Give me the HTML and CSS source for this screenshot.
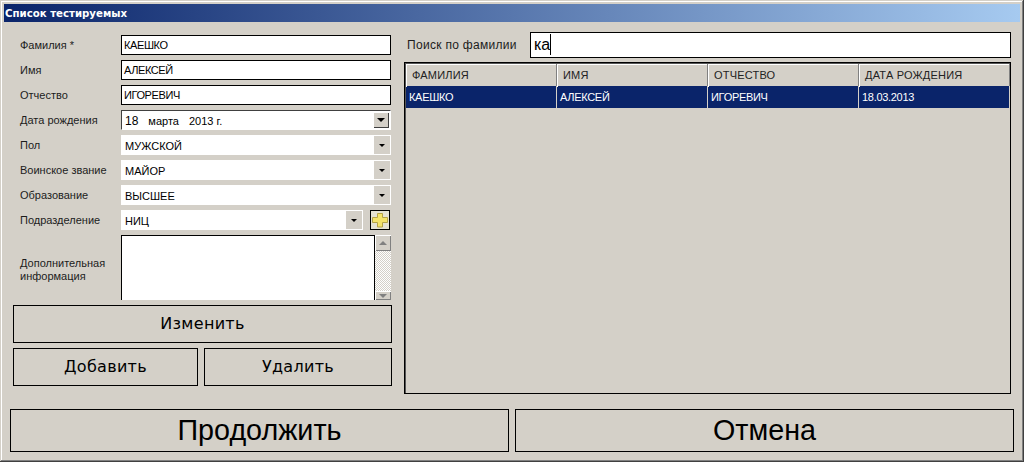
FILE: index.html
```html
<!DOCTYPE html>
<html>
<head>
  <meta charset="utf-8">
  <meta name="viewport" content="width=device-width">
  <title>Список тестируемых</title>
  <link rel="stylesheet" href="styles.css">
</head>
<body>
  <div class="window">
    <div class="titlebar">Список тестируемых</div>
    <div class="main">
      <div class="left">
        <div class="form">
          <div class="label">Фамилия *</div>
          <div class="edit">КАЕШКО</div>
          <div class="label">Имя</div>
          <div class="edit">АЛЕКСЕЙ</div>
          <div class="label">Отчество</div>
          <div class="edit">ИГОРЕВИЧ</div>
          <div class="label">Дата рождения</div>
          <div class="date">
            <span class="date-text"><span>18</span><span>марта</span><span>2013 г.</span></span>
            <span class="date-btn"><i class="arrow"></i></span>
          </div>
          <div class="label">Пол</div>
          <div class="combo"><span class="combo-text">МУЖСКОЙ</span><span class="combo-btn"><i class="arrow small"></i></span></div>
          <div class="label">Воинское звание</div>
          <div class="combo"><span class="combo-text">МАЙОР</span><span class="combo-btn"><i class="arrow small"></i></span></div>
          <div class="label">Образование</div>
          <div class="combo"><span class="combo-text">ВЫСШЕЕ</span><span class="combo-btn"><i class="arrow small"></i></span></div>
          <div class="label">Подразделение</div>
          <div class="combo-row">
            <div class="combo"><span class="combo-text">НИЦ</span><span class="combo-btn"><i class="arrow small"></i></span></div>
            <div class="add-btn">
              <svg width="18" height="18" viewBox="0 0 18 18"><path d="M6.500 2.500h5v4h5v5h-5v4.500h-5v-4.500h-5v-5h5z" fill="#f5e36a" stroke="#b5a347"/></svg>
            </div>
          </div>
          <div class="label memo-label">Дополнительная информация</div>
          <div class="memo">
            <div class="memo-text"></div>
            <div class="scroll">
              <span class="scroll-btn"><i class="arrow up"></i></span>
              <span class="scroll-track"></span>
              <span class="scroll-btn cut"><i class="arrow"></i></span>
            </div>
          </div>
        </div>
        <div class="btn btn-mid">Изменить</div>
        <div class="btn-row">
          <div class="btn btn-mid btn-add">Добавить</div>
          <div class="btn btn-mid btn-del">Удалить</div>
        </div>
      </div>
      <div class="right">
        <div class="search">
          <div class="search-label">Поиск по фамилии</div>
          <div class="search-box"><span class="search-text">ка</span></div>
        </div>
        <div class="grid">
          <div class="grid-row grid-head">
            <div>ФАМИЛИЯ</div>
            <div>ИМЯ</div>
            <div>ОТЧЕСТВО</div>
            <div>ДАТА РОЖДЕНИЯ</div>
          </div>
          <div class="grid-row grid-sel">
            <div>КАЕШКО</div>
            <div>АЛЕКСЕЙ</div>
            <div>ИГОРЕВИЧ</div>
            <div>18.03.2013</div>
          </div>
        </div>
      </div>
    </div>
    <div class="footer">
      <div class="btn btn-big">Продолжить</div>
      <div class="btn btn-big">Отмена</div>
    </div>
  </div>
</body>
</html>
```

FILE: styles.css
```css
*{
  padding: 0;
  margin: 0;
  box-sizing: border-box;
}
html, body{
  width: 1024px;
  height: 462px;
  overflow: hidden;
}
body{
  font-family: "Liberation Sans", Arial, sans-serif;
  font-size: 11px;
  color: #000;
  background: #d4d0c8;
}
.window{
  display: flex;
  flex-direction: column;
  width: 1024px;
  height: 462px;
  padding: 4px;
  background: #d4d0c8;
  box-shadow: inset -1px -1px 0 #404040, inset 1px 1px 0 #d4d0c8, inset -2px -2px 0 #808080, inset 2px 2px 0 #fff;
}
.titlebar{
  height: 18px;
  padding-left: 1px;
  font-family: "DejaVu Sans", sans-serif;
  font-size: 10.2px;
  font-weight: bold;
  line-height: 19px;
  color: #fff;
  background: linear-gradient(to right, #0a246a, #a6caf0);
}
.main{
  display: flex;
  flex: 1;
  gap: 12px;
  padding: 10px 0 0 9px;
}
.left{
  width: 379px;
  padding-top: 3px;
}
.form{
  display: grid;
  grid-template-columns: 108px 270px;
  grid-template-rows: repeat(8, 20px) 65px;
  row-gap: 5px;
  align-items: center;
}
.label{
  padding-left: 7px;
  line-height: 21px;
  color: #1c1c1c;
  white-space: nowrap;
}
.edit{
  height: 20px;
  padding-left: 2px;
  line-height: 18px;
  letter-spacing: -.4px;
  background: #fff;
  border: 1px solid #000;
}
.date{
  display: flex;
  justify-content: space-between;
  height: 20px;
  background: #fff;
  border: 1px solid;
  border-color: #404040 #fff #fff #404040;
}
.date-text{
  display: flex;
  gap: 10px;
  padding-left: 3px;
  line-height: 20px;
}
.date-text span:first-child{
  font-size: 12px;
}
.date-btn{
  display: flex;
  align-items: center;
  justify-content: center;
  width: 16px;
  height: 16px;
  margin: 1px;
  background: #d4d0c8;
  box-shadow: inset 1px 1px 0 #fff, inset -1px -1px 0 #404040;
}
.arrow{
  width: 0;
  height: 0;
  border-left: 4px solid transparent;
  border-right: 4px solid transparent;
  border-top: 4px solid #000;
}
.arrow.small{
  border-left-width: 3px;
  border-right-width: 3px;
  border-top-width: 3px;
}
.arrow.up{
  border-top: 0;
  border-bottom: 4px solid #808080;
}
.combo{
  display: flex;
  flex: 1;
  justify-content: space-between;
  height: 20px;
  background: #fff;
}
.combo-text{
  padding-left: 4px;
  line-height: 22px;
}
.combo-btn{
  display: flex;
  align-items: center;
  justify-content: center;
  width: 16px;
  height: 18px;
  margin: 1px;
  background: #d4d0c8;
}
.combo-row{
  display: flex;
  gap: 7px;
  height: 20px;
}
.add-btn{
  width: 20px;
  height: 20px;
  margin-right: 1px;
  background: #e6e2d2;
  border: 1px solid #000;
}
.add-btn svg{
  display: block;
}
.memo-label{
  align-self: start;
  width: 100px;
  margin-top: 22px;
  line-height: 13px;
  white-space: normal;
}
.memo{
  display: flex;
  height: 65px;
}
.memo-text{
  flex: 1;
  background: #fff;
  border: 1px solid #000;
  border-bottom: 0;
}
.scroll{
  display: flex;
  flex-direction: column;
  width: 16px;
}
.scroll-btn{
  display: flex;
  flex: none;
  align-items: center;
  justify-content: center;
  width: 16px;
  height: 16px;
  background: #d4d0c8;
  box-shadow: inset 1px 1px 0 #fff, inset -1px -1px 0 #808080;
}
.scroll-btn.cut{
  height: 9px;
}
.scroll-btn.cut .arrow{
  border-top-color: #808080;
}
.scroll-track{
  flex: 1;
  background: repeating-conic-gradient(#fff 0 25%, #d4d0c8 0 50%) 0 0 / 2px 2px;
}
.btn{
  display: flex;
  align-items: center;
  justify-content: center;
  background: #d4d0c8;
  border: 1px solid #000;
}
.btn-mid{
  height: 38px;
  margin-top: 5px;
  padding-bottom: 1px;
  font-family: "DejaVu Sans", sans-serif;
  font-size: 16px;
  letter-spacing: .3px;
}
.btn-row{
  display: flex;
  gap: 6px;
}
.btn-add{
  width: 185px;
}
.btn-del{
  flex: 1;
}
.right{
  display: flex;
  flex-direction: column;
  width: 607px;
}
.search{
  display: flex;
  align-items: center;
  justify-content: space-between;
  height: 26px;
  padding-left: 3px;
}
.search-label{
  font-size: 12px;
  letter-spacing: .3px;
  color: #1c1c1c;
}
.search-box{
  width: 481px;
  height: 26px;
  padding-left: 3px;
  font-size: 16px;
  line-height: 24px;
  background: #fff;
  border: 1px solid #000;
}
.search-text{
  display: inline-block;
  height: 21px;
  line-height: 21px;
  border-right: 1px solid #000;
}
.grid{
  height: 332px;
  margin-top: 4px;
  padding: 1px 0 1px 1px;
  background: #d4d0c8;
  border: 1px solid #000;
  box-shadow: inset 1px 1px 0 #555;
}
.grid-row{
  display: grid;
  grid-template-columns: 151px 151px 151px 1fr;
  height: 22px;
  line-height: 23px;
}
.grid-head{
  color: #222;
  letter-spacing: .2px;
}
.grid-head div{
  padding-left: 6px;
  border-right: 1px solid #808080;
  box-shadow: inset 1px 1px 0 #fff;
}
.grid-sel{
  color: #fff;
  letter-spacing: -.3px;
  background: #0a246a;
}
.grid-sel div{
  padding-left: 3px;
  border-right: 1px solid #d4d0c8;
}
.footer{
  display: flex;
  gap: 6px;
  padding: 0 6px 6px;
}
.btn-big{
  flex: 1;
  height: 43px;
  font-size: 28.7px;
}
```
